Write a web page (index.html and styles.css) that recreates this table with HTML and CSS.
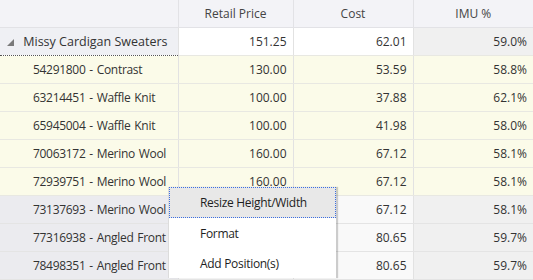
FILE: index.html
```html
<!DOCTYPE html>
<html lang="en">
<head>
    <meta charset="UTF-8">
    <title>Assortment Grid</title>
    <link rel="stylesheet" href="styles.css">
</head>
<body>
    <div class="grid-wrap">
        <table class="grid">
            <colgroup>
                <col class="col-name">
                <col class="col-retail">
                <col class="col-cost">
                <col class="col-imu">
            </colgroup>
            <thead>
                <tr>
                    <th></th>
                    <th>Retail Price</th>
                    <th>Cost</th>
                    <th>IMU %</th>
                </tr>
            </thead>
            <tbody>
                <tr class="group">
                    <td class="name">
                        <svg class="caret" width="7" height="7" viewBox="0 0 7 7"><polygon points="7,0 7,7 0,7" fill="#7a7a7a"/></svg>
                        Missy Cardigan Sweaters
                    </td>
                    <td class="num">151.25</td>
                    <td class="num">62.01</td>
                    <td class="num pct">59.0%</td>
                </tr>
                <tr class="item">
                    <td class="name">54291800 - Contrast</td>
                    <td class="num">130.00</td>
                    <td class="num">53.59</td>
                    <td class="num">58.8%</td>
                </tr>
                <tr class="item">
                    <td class="name">63214451 - Waffle Knit</td>
                    <td class="num">100.00</td>
                    <td class="num">37.88</td>
                    <td class="num">62.1%</td>
                </tr>
                <tr class="item">
                    <td class="name">65945004 - Waffle Knit</td>
                    <td class="num">100.00</td>
                    <td class="num">41.98</td>
                    <td class="num">58.0%</td>
                </tr>
                <tr class="item">
                    <td class="name">70063172 - Merino Wool</td>
                    <td class="num">160.00</td>
                    <td class="num">67.12</td>
                    <td class="num">58.1%</td>
                </tr>
                <tr class="item">
                    <td class="name">72939751 - Merino Wool</td>
                    <td class="num">160.00</td>
                    <td class="num">67.12</td>
                    <td class="num">58.1%</td>
                </tr>
                <!-- retail cells below sit under the open menu -->
                <tr class="item selected">
                    <td class="name">73137693 - Merino Wool</td>
                    <td class="num"></td>
                    <td class="num">67.12</td>
                    <td class="num pct">58.1%</td>
                </tr>
                <tr class="item selected">
                    <td class="name">77316938 - Angled Front</td>
                    <td class="num"></td>
                    <td class="num">80.65</td>
                    <td class="num pct">59.7%</td>
                </tr>
                <tr class="item selected">
                    <td class="name">78498351 - Angled Front</td>
                    <td class="num"></td>
                    <td class="num">80.65</td>
                    <td class="num pct">59.7%</td>
                </tr>
            </tbody>
        </table>

        <ul class="context-menu">
            <li class="active">Resize Height/Width</li>
            <li>Format</li>
            <li>Add Position(s)</li>
        </ul>
    </div>
</body>
</html>
```

FILE: styles.css
```css
* {
    margin: 0;
    padding: 0;
    box-sizing: border-box;
}

body {
    font-family: 'Open Sans', 'Noto Sans', sans-serif;
    font-size: 12px;
    color: #333;
    background: #fff;
    overflow: hidden;
}

.grid-wrap {
    position: relative;
    width: 533px;
    height: 280px;
}

.grid {
    border-collapse: collapse;
    table-layout: fixed;
    width: 533px;
}

.col-name { width: 178px; }
.col-retail { width: 115px; }
.col-cost { width: 120px; }
.col-imu { width: 120px; }

th {
    height: 27px;
    background: #f3f3f7;
    font-weight: normal;
    color: #444;
    border-right: 1px solid #e2e2e6;
    border-bottom: 1px solid #e2e2e6;
}

th:last-child {
    border-right: none;
}

td {
    height: 28px;
    border-right: 1px solid #e2e2e2;
    border-bottom: 1px solid #e8e8e2;
    white-space: nowrap;
    overflow: hidden;
}

td:last-child {
    border-right: none;
}

.num {
    text-align: right;
    padding-right: 6px;
}

.name {
    padding-left: 33px;
    letter-spacing: -0.3px;
    word-spacing: 1px;
}

.group td {
    background: #fff;
}

.group .name {
    background: #eff0f4;
    padding-left: 7px;
    font-size: 12.5px;
    letter-spacing: 0;
    word-spacing: 0;
    border-bottom: 1px dotted #555;
}

.caret {
    margin-right: 6px;
    vertical-align: 0;
}

.group .pct {
    background: #f0f0f0;
}

.item td {
    background: #fbfbe9;
}

.selected td {
    background: #f9f9f9;
    border-bottom-color: #e4e4e4;
}

.selected .name {
    background: #ebebef;
}

.selected .pct {
    background: #f0f0f0;
}

.context-menu {
    position: absolute;
    left: 168px;
    top: 187px;
    width: 168px;
    list-style: none;
    background: #fff;
    border-left: 1px solid #dcdcdc;
    box-shadow: 2px 0 1px rgba(0, 0, 0, 0.18);
    color: #1e1e1e;
    letter-spacing: -0.3px;
}

.context-menu li {
    height: 30px;
    line-height: 30px;
    padding-left: 30px;
    border: 1px solid transparent;
}

.context-menu li.active {
    height: 31px;
    background: #e8e8e8;
    border: 1px dotted #3c6ee0;
}
```
